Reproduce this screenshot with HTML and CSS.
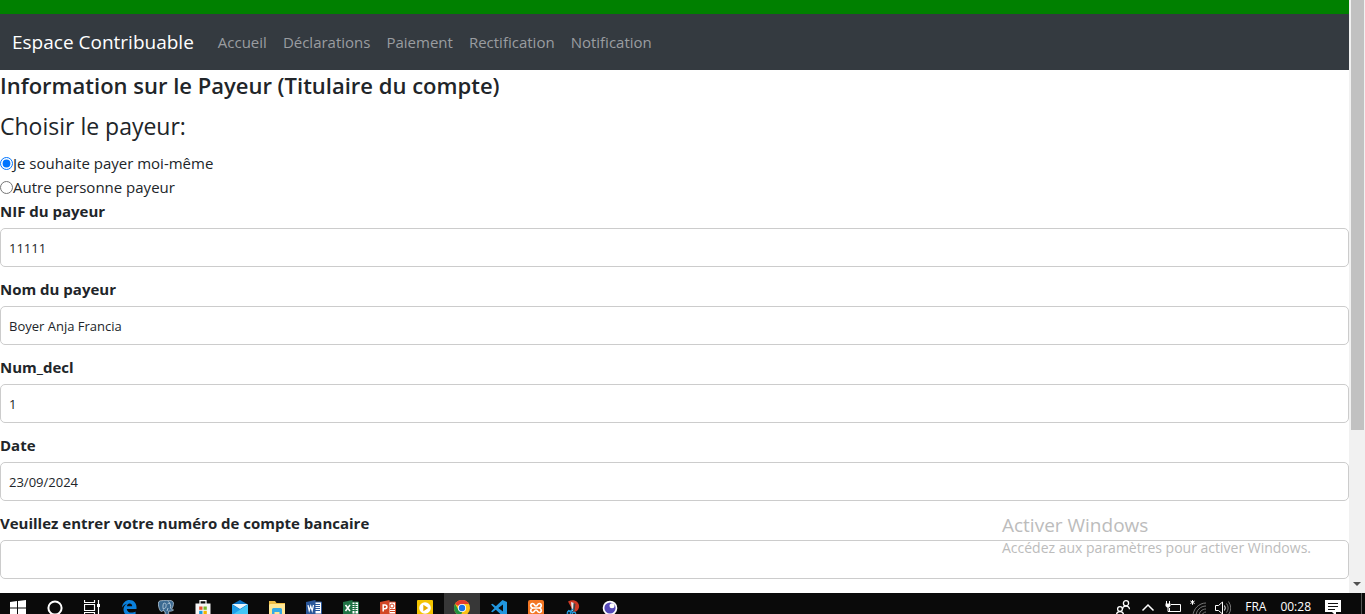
FILE: index.html
```html
<!DOCTYPE html>
<html lang="fr">
<head>
<meta charset="utf-8">
<title>Espace Contribuable</title>
<link rel="stylesheet" href="styles.css">
</head>
<body>
<div class="viewport">
  <div class="page">
    <div class="strip"></div>
    <nav class="navbar">
      <a class="brand" href="#">Espace Contribuable</a>
      <a class="nav-link" href="#">Accueil</a>
      <a class="nav-link" href="#">Déclarations</a>
      <a class="nav-link" href="#">Paiement</a>
      <a class="nav-link" href="#">Rectification</a>
      <a class="nav-link" href="#">Notification</a>
    </nav>
    <form class="payer-form">
      <h1 class="title">Information sur le Payeur (Titulaire du compte)</h1>
      <fieldset class="choices">
        <legend class="legend">Choisir le payeur:</legend>
        <label class="choice"><input class="radio" type="radio" name="payeur" checked>Je souhaite payer moi-même</label>
        <label class="choice"><input class="radio" type="radio" name="payeur">Autre personne payeur</label>
      </fieldset>
      <div class="fields">
        <div class="field"><label class="label" for="nif">NIF du payeur</label><input class="input" id="nif" type="text" value="11111"></div>
        <div class="field"><label class="label" for="nom">Nom du payeur</label><input class="input" id="nom" type="text" value="Boyer Anja Francia"></div>
        <div class="field"><label class="label" for="num">Num_decl</label><input class="input" id="num" type="text" value="1"></div>
        <div class="field"><label class="label" for="date">Date</label><input class="input" id="date" type="text" value="23/09/2024"></div>
        <div class="field"><label class="label" for="compte">Veuillez entrer votre numéro de compte bancaire</label><input class="input" id="compte" type="text"></div>
      </div>
    </form>
  </div>
  <div class="scrollbar">
    <div class="thumb"></div>
    <svg class="arrow" viewBox="0 0 16 16"><path d="M4 5h8L8 9z" fill="#505050"/></svg>
  </div>
  <div class="watermark">
    <div class="watermark-title">Activer Windows</div>
    <div class="watermark-text">Accédez aux paramètres pour activer Windows.</div>
  </div>
</div>
<div class="taskbar">
  <div class="apps">
    <button class="app" aria-label="Démarrer"><svg class="icon" viewBox="0 0 16 16" fill="#fff"><path d="M0 2l7-1v6.500H0zM8 .9L16 0v7.500H8zM0 8.500h7V15l-7-1zM8 8.500h8V16l-8-1z"/></svg></button>
    <button class="app" aria-label="Cortana"><svg class="icon" viewBox="0 0 16 16"><circle cx="8" cy="8" r="6.600" fill="none" stroke="#fff" stroke-width="2"/></svg></button>
    <button class="app" aria-label="Vue des tâches"><svg class="icon" viewBox="0 0 16 16" fill="none" stroke="#fff"><path d="M.5 0v2.500h10V0M.5 16v-3.500h10V16M.5 4.500h10v6H.5zM14.500 0v16" stroke-width="1.200"/><path d="M13 4h3v3h-3z" fill="#fff" stroke="none"/></svg></button>
    <button class="app" aria-label="Edge"><svg class="icon" viewBox="0 0 16 16"><path d="M1 7.500C1.500 2.500 5 0 8.500 0 13 0 15.500 3.300 15.500 7.300V9H5.800c.2 2.500 2.200 3.600 4.500 3.600 1.700 0 3.200-.5 4.300-1.200v3.200c-1.400.8-3.100 1.300-5.100 1.300-4.300 0-7-2.500-7-6.500 0-2.500 1.400-4.600 3.600-5.700C3.900 4.200 2.100 5.500 1 7.500zM5.900 6.300h5.300c0-1.800-.9-2.900-2.600-2.900-1.500 0-2.500 1.200-2.700 2.900z" fill="#0b80dc"/></svg></button>
    <button class="app" aria-label="PostgreSQL"><svg class="icon" viewBox="0 0 16 16"><path d="M4 .7C1 .3 0 2 .4 5c.4 3 1.700 6.500 3.100 6.500 1 0 1.500-1 2-1.500.4 1.500 1 2 1.700 2V16h3.500v-5c2 .5 4-.2 4.800-1-1-.3-1.500-.4-2-.7 1.300-2 2.100-4.500 1.900-6.500C15 .5 12 .1 10 .7 8 .2 6 .2 4 .7z" fill="#3c6a91" stroke="#b5c9d9" stroke-width=".8"/><path d="M5.500 9.500C4.500 7 5 5 5.500 3.500c2-1 3 .5 2.500 3-.2 1.500-1 2-2.500 2M10.500 1.500c2 2 2.500 4 2 7M9.500 4c1-1 2-.6 2.500 0M9 11l1-3" fill="none" stroke="#c5d7e4" stroke-width=".8"/></svg></button>
    <button class="app" aria-label="Microsoft Store"><svg class="icon" viewBox="0 0 16 16"><path d="M5 4V.7h6V4" fill="none" stroke="#fff" stroke-width="1.200"/><path d="M.5 3.500h15V16H.5z" fill="#f5f5f5"/><path d="M4.200 6.500h3.300v3.300H4.200z" fill="#e8502d"/><path d="M8.500 6.500h3.300v3.300H8.500z" fill="#75b82a"/><path d="M4.200 10.800h3.300v3.300H4.200z" fill="#159de3"/><path d="M8.500 10.800h3.300v3.300H8.500z" fill="#f4b500"/></svg></button>
    <button class="app" aria-label="Courrier"><svg class="icon" viewBox="0 0 16 16"><path d="M0 4.500L8 0l8 4.500V15H0z" fill="#0872c4"/><path d="M0 4h16L8 9z" fill="#e9f5fc"/><path d="M0 4.500l8 5 8-5V15H0z" fill="#1e9ee9"/><path d="M0 15L16 4.500V15z" fill="#42c5f5"/></svg></button>
    <button class="app" aria-label="Explorateur"><svg class="icon" viewBox="0 0 16 16"><path d="M0 1h6l1.500 2H16v13H0z" fill="#eebd46"/><path d="M1 4h15v12H0V5z" fill="#ffe795"/><path d="M3 16V9.500Q3 8 4.500 8h7Q13 8 13 9.500V16h-2.500v-4h-5v4z" fill="#35aae7"/></svg></button>
    <button class="app" aria-label="Word"><svg class="icon" viewBox="0 0 16 16"><path d="M8 2h7.500v12H8z" fill="#fff" stroke="#2b579a"/><path d="M9 4.500h5M9 6.500h5M9 8.500h5M9 10.500h5" stroke="#2b579a"/><path d="M0 2l9.500-2v16L0 14z" fill="#2b579a"/><path d="M2 5.200l1.200 5.500L4.700 6l1.500 4.700L7.500 5" fill="none" stroke="#fff" stroke-width="1.200"/></svg></button>
    <button class="app" aria-label="Excel"><svg class="icon" viewBox="0 0 16 16"><path d="M8 2h7.500v12H8z" fill="#fff" stroke="#217346"/><path d="M9 4.500h5.500M9 6.500h5.500M9 8.500h5.500M9 10.500h5.500M12 2v12" stroke="#217346"/><path d="M0 2l9.500-2v16L0 14z" fill="#217346"/><path d="M2.500 5l4.500 6M7 5l-4.500 6" fill="none" stroke="#fff" stroke-width="1.500"/></svg></button>
    <button class="app" aria-label="PowerPoint"><svg class="icon" viewBox="0 0 16 16"><path d="M8 2h7.500v12H8z" fill="#fff" stroke="#d24726"/><path d="M10 9.500h5M10 11.500h5" stroke="#d24726"/><circle cx="12" cy="6" r="2" fill="none" stroke="#d24726"/><path d="M0 2l9.500-2v16L0 14z" fill="#d24726"/><path d="M3.200 11.500V5h1.700c2.700 0 2.700 3.700 0 3.700H3.200" fill="none" stroke="#fff" stroke-width="1.500"/></svg></button>
    <button class="app" aria-label="Lecteur"><svg class="icon" viewBox="0 0 16 16"><rect width="16" height="16" rx="1" fill="#f4c400"/><circle cx="8" cy="8" r="5.800" fill="#fff"/><path d="M6.300 4.800L11.300 8l-5 3.200z" fill="#e3ab00"/></svg></button>
    <button class="app app-active" aria-label="Chrome"><svg class="icon" viewBox="0 0 16 16"><circle cx="8" cy="8" r="8" fill="#fbc116"/><path d="M8 8L1.070 4A8 8 0 0 1 14.930 4H8z" fill="#e33b2e"/><path d="M1.070 4L4.500 10 8 12l-1 3.940A8 8 0 0 1 1.070 4z" fill="#229342"/><circle cx="8" cy="8" r="4.100" fill="#fff"/><circle cx="8" cy="8" r="3.200" fill="#1a73e8"/></svg></button>
    <button class="app" aria-label="Visual Studio Code"><svg class="icon" viewBox="0 0 16 16"><path d="M11.500 0L16 2v12l-4.500 2L4.800 9.700 1.500 12.300 0 11.500 3.500 8 0 4.500l1.500-.8 3.300 2.600zM12 4.500L7.300 8l4.700 3.500z" fill="#2196df"/></svg></button>
    <button class="app" aria-label="XAMPP"><svg class="icon" viewBox="0 0 16 16"><rect width="16" height="16" rx="2" fill="#f37623"/><path d="M5.500 8h5M5.500 8C2 8 2 3.500 4.500 3.500S6 6 8 6s1-2.500 3.500-2.500S14 8 10.500 8c3.500 0 3.500 4.500 1 4.500S10 10 8 10s-1 2.500-3.500 2.500S2 8 5.500 8z" fill="none" stroke="#fff" stroke-width="1.700"/></svg></button>
    <button class="app" aria-label="Outil Capture"><svg class="icon" viewBox="0 0 16 16"><path d="M3 1.500C9-2 15 2 14 7.500c-.7 3-3 4.500-5.500 4.500L7 9z" fill="#ce3924"/><path d="M6 2l3 1v8H7z" fill="#e4e8eb"/><path d="M8.500 3l2 1-1 7H8z" fill="#444"/><g fill="none" stroke="#2294d6" stroke-width="1.400"><circle cx="4" cy="13" r="1.700"/><circle cx="9" cy="14" r="1.700"/><path d="M3 10.500l5 2M8 9l-3 3"/></g></svg></button>
    <button class="app" aria-label="Insomnia"><svg class="icon" viewBox="0 0 16 16"><circle cx="8" cy="8" r="7.300" fill="#fff"/><circle cx="8" cy="8" r="5.600" fill="#5649b9"/><circle cx="10" cy="5.800" r="2.500" fill="#fff"/></svg></button>
  </div>
  <div class="tray">
    <div class="tray-icons">
    <svg class="icon" viewBox="0 0 16 16" fill="none" stroke="#fff" stroke-width="1.300"><circle cx="11" cy="3.300" r="2.600"/><path d="M7.500 9c.3-4 6.700-4 7 .3"/><circle cx="5" cy="9" r="2.400"/><path d="M1.500 15c0-4.500 7-4.500 7 0"/></svg>
    <svg class="icon" viewBox="0 0 16 16" fill="none" stroke="#fff" stroke-width="1.500"><path d="M2.500 10.500L8 5l5.500 5.500"/></svg>
    <svg class="icon" viewBox="0 0 16 16" fill="none" stroke="#fff"><path d="M6 4.500h9.500v7H4.500V8M1.500 1v3M4.500 1v3M3 7v4.500h2"/><path d="M.5 3.500h5V6L4 7.500H2L.5 6z" fill="#fff" stroke="none"/></svg>
    <svg class="icon" viewBox="0 0 16 16" fill="none" stroke="#777"><path d="M3 16C3 9 9 3 16 3M6 16c0-5.500 4.500-10 10-10M9 16c0-4 3-7 7-7M12 16c0-2.500 2-4 4-4"/><path d="M2.500-.2v5M.4 1l4.200 2.500M4.600 1L.4 3.500" stroke="#fff"/></svg>
    <svg class="icon" viewBox="0 0 16 16" fill="none" stroke="#fff"><path d="M.5 5.500h3l4-3.500v12l-4-3.500h-3zM9.500 5.500q1.500 2.500 0 5"/><path d="M11.500 3.500q3.300 4.500 0 9M13.500 1.500q4.500 6.500 0 13" stroke="#777"/></svg>
    </div>
    <span class="tray-text">FRA</span>
    <span class="tray-text">00:28</span>
    <svg class="icon" viewBox="0 0 16 16"><path d="M0 0h16v12h-5v4l-4-4H0z" fill="#fff"/><path d="M3 3.500h10M3 6.500h10M3 9.500h7" stroke="#111"/></svg>
  </div>
  <div class="show-desktop"></div>
</div>
</body>
</html>
```

FILE: styles.css
```css
* { box-sizing: border-box; }

body {
  display: flex;
  flex-direction: column;
  height: 100vh;
  margin: 0;
  overflow: hidden;
  background: #fff;
  color: #212529;
  font-family: "Open Sans", "Noto Sans", sans-serif;
  font-size: 15px;
  line-height: 24px;
}

.viewport {
  position: relative;
  display: flex;
  flex: 1;
  min-height: 0;
  overflow: hidden;
}

.page { flex: 1; min-width: 0; }
.strip { height: 14px; background: #008000; }

.navbar {
  display: flex;
  align-items: center;
  gap: 16px;
  height: 56px;
  padding: 0 12px;
  background: #343a40;
}

.brand {
  margin-right: 8px;
  color: #fff;
  font-size: 19px;
  line-height: 30px;
  text-decoration: none;
}

.nav-link { color: #9a9da0; text-decoration: none; }

.title {
  margin: 0 0 8px;
  font-size: 22px;
  font-weight: 600;
  line-height: 30px;
}

.choices { margin: 0; padding: 0; border: 0; }

.legend {
  margin-bottom: 7px;
  padding: 0;
  font-size: 23px;
  line-height: 36px;
}

.choice { display: flex; align-items: center; }
.radio { width: 13px; height: 13px; margin: 0; accent-color: #0075ff; }

.fields { display: flex; flex-direction: column; gap: 10px; }
.field { display: flex; flex-direction: column; gap: 5px; }
.label { font-weight: 700; }

.input {
  width: 100%;
  height: 39px;
  padding: 0 8px;
  border: 1px solid #ccc;
  border-radius: 5px;
  background: #fff;
  color: #212529;
  font-family: inherit;
  font-size: 13px;
}

.scrollbar {
  display: flex;
  flex-direction: column;
  justify-content: space-between;
  align-items: center;
  width: 16px;
  background: #f1f1f1;
}

.thumb { width: 13px; height: 72.5%; background: #c1c1c1; }
.arrow { width: 16px; height: 16px; }

.watermark {
  position: absolute;
  right: 54px;
  bottom: 34px;
  color: #bcbcbc;
}

.watermark-title { font-size: 19px; }
.watermark-text { font-size: 14px; line-height: 22px; }

.taskbar {
  display: flex;
  flex: none;
  height: 21px;
  overflow: hidden;
  background: #0a0a0a;
}

.apps { display: flex; flex: 1; gap: 1px; }

.app {
  display: flex;
  align-items: flex-start;
  justify-content: center;
  width: 36px;
  height: 30px;
  padding: 7px 0;
  border: 0;
  background: transparent;
}

.app-active { background: #373737; }
.icon { flex: none; width: 16px; height: 16px; }

.tray {
  display: flex;
  align-items: flex-start;
  gap: 14px;
  padding: 7px 20px 0 0;
}

.tray-icons { display: flex; gap: 9px; }

.tray-text {
  color: #fff;
  font-size: 12px;
  line-height: 14px;
}

.show-desktop { width: 4px; border-left: 1px solid #555; }
```
